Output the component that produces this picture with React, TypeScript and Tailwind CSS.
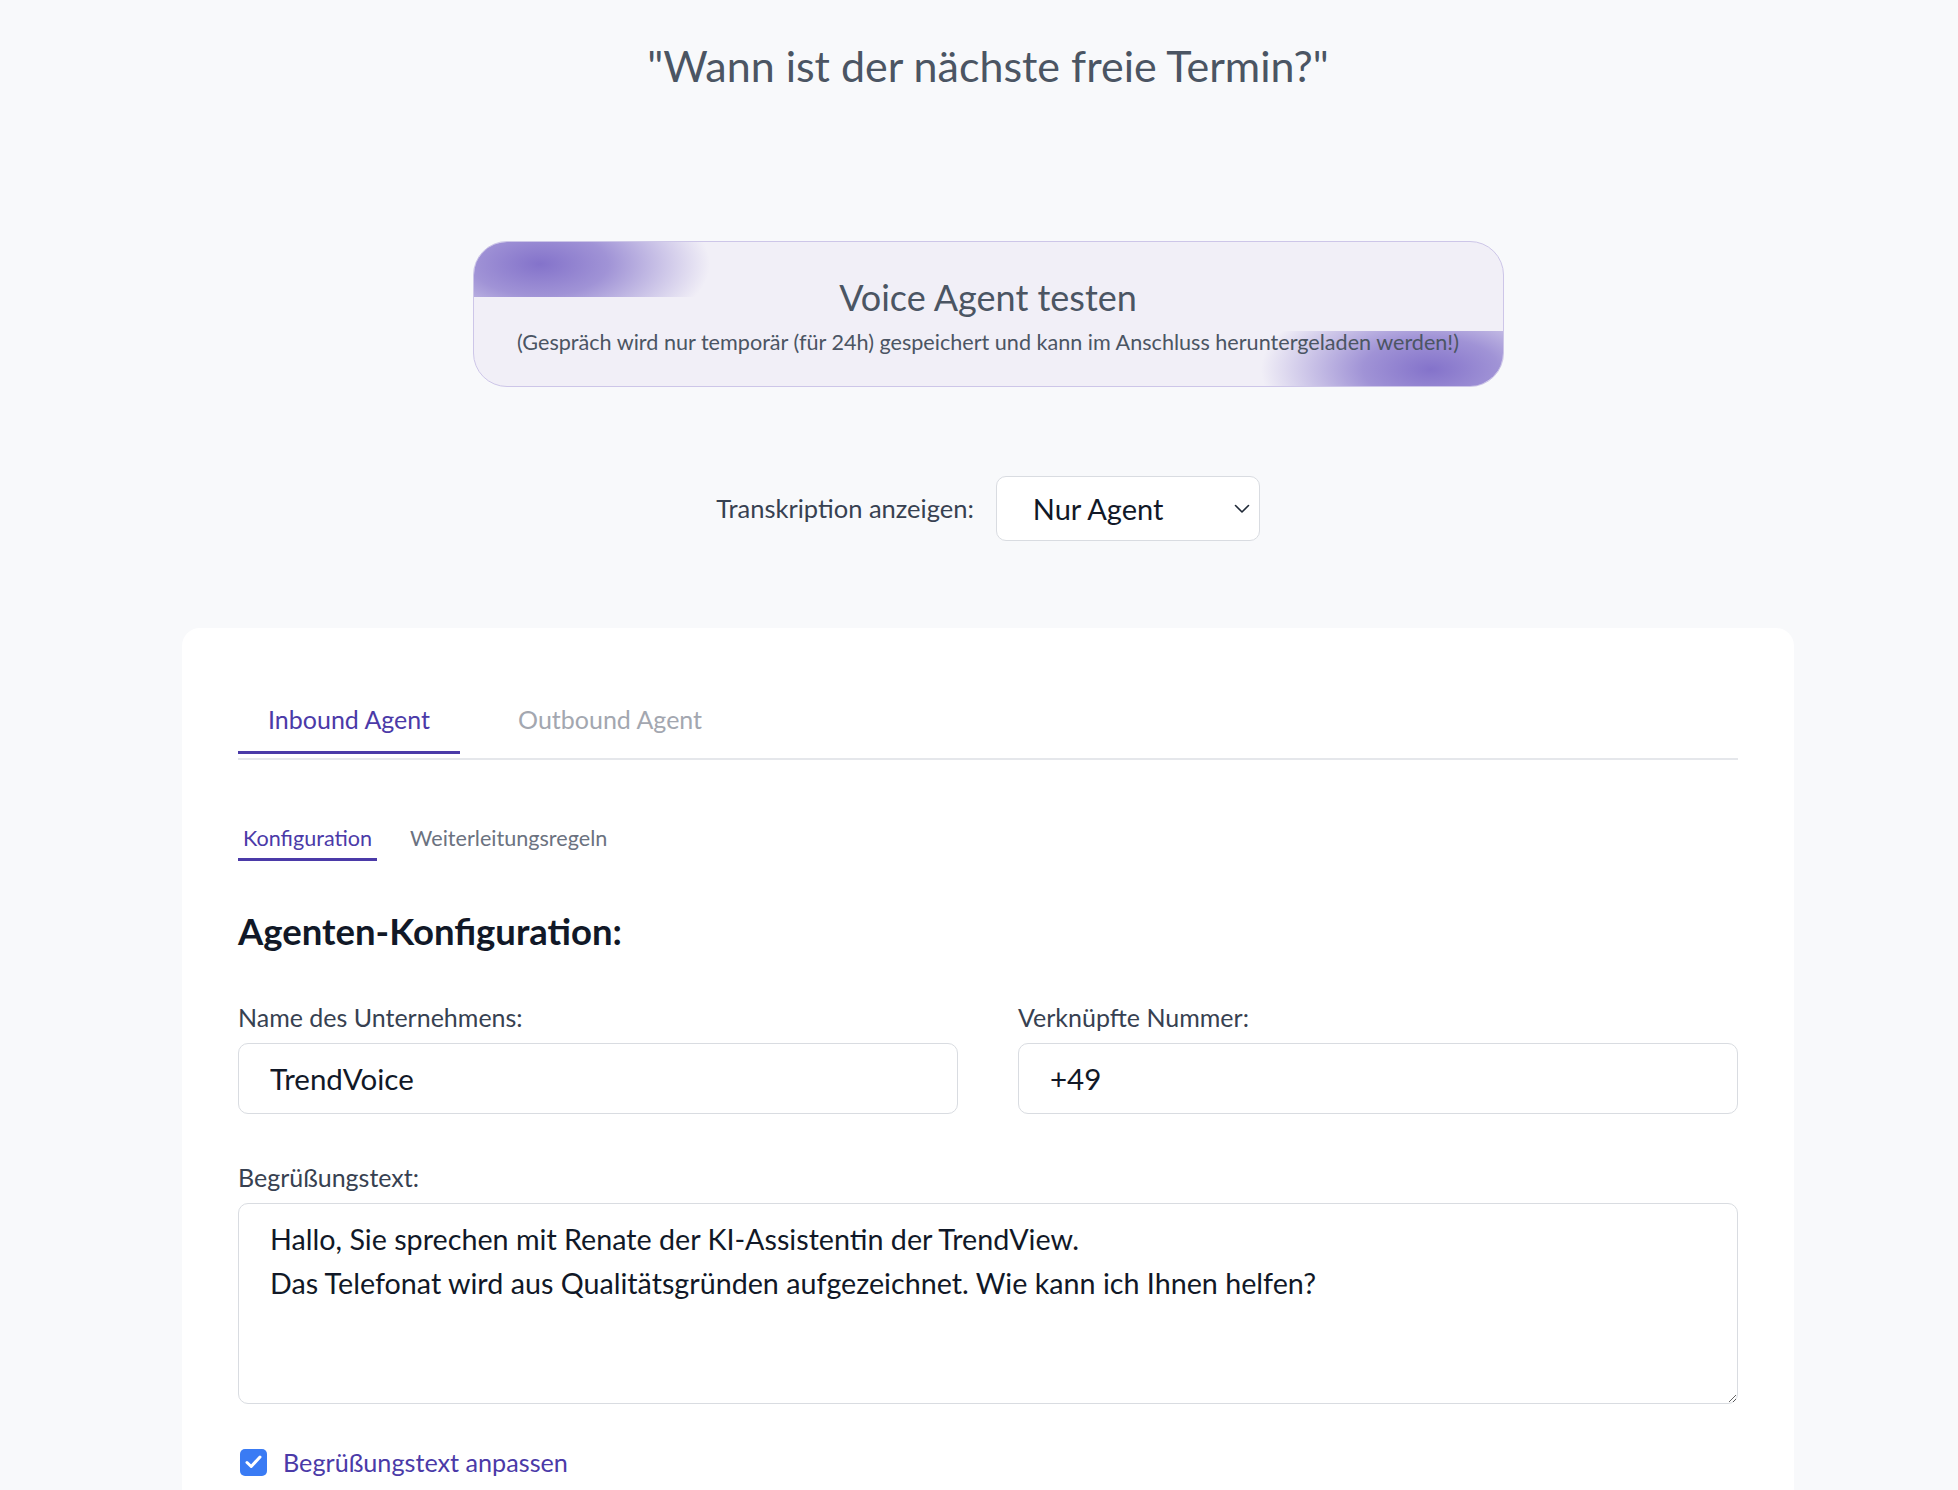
import { useState } from 'react';

const PURPLE = 'text-[#4b3aa8]';

// Kleines Chevron für das Select-Feld
const Chevron = () => (
  <svg width="16" height="10" viewBox="0 0 16 10" fill="none" className="shrink-0">
    <path d="M1.5 1.5L8 8L14.5 1.5" stroke="#1f2937" strokeWidth="1.6" strokeLinecap="round" strokeLinejoin="round" />
  </svg>
);

const CheckBox = ({ checked }: { checked: boolean }) => (
  <span className="flex h-[27px] w-[27px] shrink-0 items-center justify-center rounded-[5px] bg-[#3a7bf4]">
    {checked && (
      <svg width="17" height="14" viewBox="0 0 17 14" fill="none">
        <path d="M2 7.5L6.2 11.5L15 2" stroke="white" strokeWidth="3" strokeLinecap="round" strokeLinejoin="round" />
      </svg>
    )}
  </span>
);

export default function App() {
  const [tab, setTab] = useState<'in' | 'out'>('in');
  const [sub, setSub] = useState<'cfg' | 'rules'>('cfg');
  const [custom, setCustom] = useState(true);

  return (
    <div className="min-h-screen bg-[#f8f9fb] pl-[18px] font-['Lato','Noto_Sans',sans-serif]">
      {/* Titel */}
      <h1 className="pt-[41px] text-center text-[43px] leading-[50px] text-[#4b5563]">
        "Wann ist der nächste freie Termin?"
      </h1>

      {/* Banner */}
      <div className="relative mx-auto mt-[150px] h-[146px] w-[1031px] overflow-hidden rounded-[34px] border border-[#cdc6e8] bg-[#f1eff7]">
        {/* Farbflecken (Deko) */}
        <div className="absolute left-0 top-0 h-[55px] w-[300px] bg-[radial-gradient(ellipse_170px_80px_at_22%_40%,rgba(126,108,200,0.95),rgba(126,108,200,0.7)_40%,rgba(126,108,200,0)_100%)]" />
        <div className="absolute bottom-0 right-0 h-[55px] w-[300px] bg-[radial-gradient(ellipse_170px_80px_at_76%_70%,rgba(126,108,200,0.95),rgba(126,108,200,0.7)_40%,rgba(126,108,200,0)_100%)]" />
        <div className="relative flex h-full flex-col items-center pt-[34px]">
          <h2 className="text-[36px] leading-[42px] text-[#4b5563]">Voice Agent testen</h2>
          <p className="mt-[10px] text-[21.6px] leading-[28px] text-[#4b5563]">
            (Gespräch wird nur temporär (für 24h) gespeichert und kann im Anschluss heruntergeladen werden!)
          </p>
        </div>
      </div>

      {/* Transkription */}
      <div className="mt-[89px] flex items-center justify-center gap-[22px]">
        <span className="text-[25.5px] text-[#374151]">Transkription anzeigen:</span>
        <button className="flex h-[65px] w-[264px] items-center justify-between rounded-[10px] border border-[#d9dce1] bg-white pl-[36px] pr-[9px] text-[29px] text-[#111827]">
          <span>Nur Agent</span>
          <Chevron />
        </button>
      </div>

      {/* Karte */}
      <div className="mx-auto mt-[87px] w-[1612px] rounded-t-[18px] bg-white px-[56px] pb-[40px] pt-[73px]">
        {/* Haupt-Tabs */}
        <div className="flex gap-[28px] border-b-2 border-[#e5e7eb]">
          <button
            onClick={() => setTab('in')}
            className={`mb-[4px] border-b-[3px] px-[30px] pb-[14px] text-[25px] leading-[36px] ${tab === 'in' ? 'border-[#4b3aa8] text-[#4b3aa8]' : 'border-transparent text-[#a3a7b0]'}`}
          >
            Inbound Agent
          </button>
          <button
            onClick={() => setTab('out')}
            className={`mb-[4px] border-b-[3px] px-[30px] pb-[14px] text-[25px] leading-[36px] ${tab === 'out' ? 'border-[#4b3aa8] text-[#4b3aa8]' : 'border-transparent text-[#a3a7b0]'}`}
          >
            Outbound Agent
          </button>
        </div>

        {/* Unter-Tabs */}
        <div className="mt-[63px] flex gap-[28px]">
          <button
            onClick={() => setSub('cfg')}
            className={`border-b-[3px] px-[5px] pb-[5px] text-[21.6px] leading-[30px] ${sub === 'cfg' ? 'border-[#4b3aa8] text-[#4b3aa8]' : 'border-transparent text-[#6b7280]'}`}
          >
            Konfiguration
          </button>
          <button
            onClick={() => setSub('rules')}
            className={`border-b-[3px] px-[5px] pb-[5px] text-[21.6px] leading-[30px] ${sub === 'rules' ? 'border-[#4b3aa8] text-[#4b3aa8]' : 'border-transparent text-[#6b7280]'}`}
          >
            Weiterleitungsregeln
          </button>
        </div>

        <h3 className="mt-[48px] text-[36.5px] font-bold leading-[44px] text-[#111827]">Agenten-Konfiguration:</h3>

        {/* Felder */}
        <div className="mt-[49px] grid grid-cols-2 gap-x-[60px]">
          <label className="flex flex-col">
            <span className="text-[25px] leading-[30px] text-[#374151]">Name des Unternehmens:</span>
            <input
              defaultValue="TrendVoice"
              className="mt-[11px] h-[71px] rounded-[10px] border border-[#d9dce1] bg-white px-[31px] text-[29.5px] text-[#111827] outline-none"
            />
          </label>
          <label className="flex flex-col">
            <span className="text-[25px] leading-[30px] text-[#374151]">Verknüpfte Nummer:</span>
            <input
              defaultValue="+49"
              className="mt-[11px] h-[71px] rounded-[10px] border border-[#d9dce1] bg-white px-[31px] text-[29.5px] text-[#111827] outline-none"
            />
          </label>
        </div>

        <label className="mt-[48px] flex flex-col">
          <span className="text-[25px] leading-[30px] text-[#374151]">Begrüßungstext:</span>
          <textarea
            defaultValue={'Hallo, Sie sprechen mit Renate der KI-Assistentin der TrendView.\nDas Telefonat wird aus Qualitätsgründen aufgezeichnet. Wie kann ich Ihnen helfen?'}
            className="mt-[11px] h-[201px] resize-y rounded-[10px] border border-[#d9dce1] bg-white px-[31px] py-[13px] text-[28.7px] leading-[44px] text-[#111827] outline-none"
          />
        </label>

        <button onClick={() => setCustom(!custom)} className="mt-[43px] ml-[2px] flex items-center gap-[16px]">
          <CheckBox checked={custom} />
          <span className={`text-[25.2px] leading-[30px] ${PURPLE}`}>Begrüßungstext anpassen</span>
        </button>
      </div>
    </div>
  );
}
